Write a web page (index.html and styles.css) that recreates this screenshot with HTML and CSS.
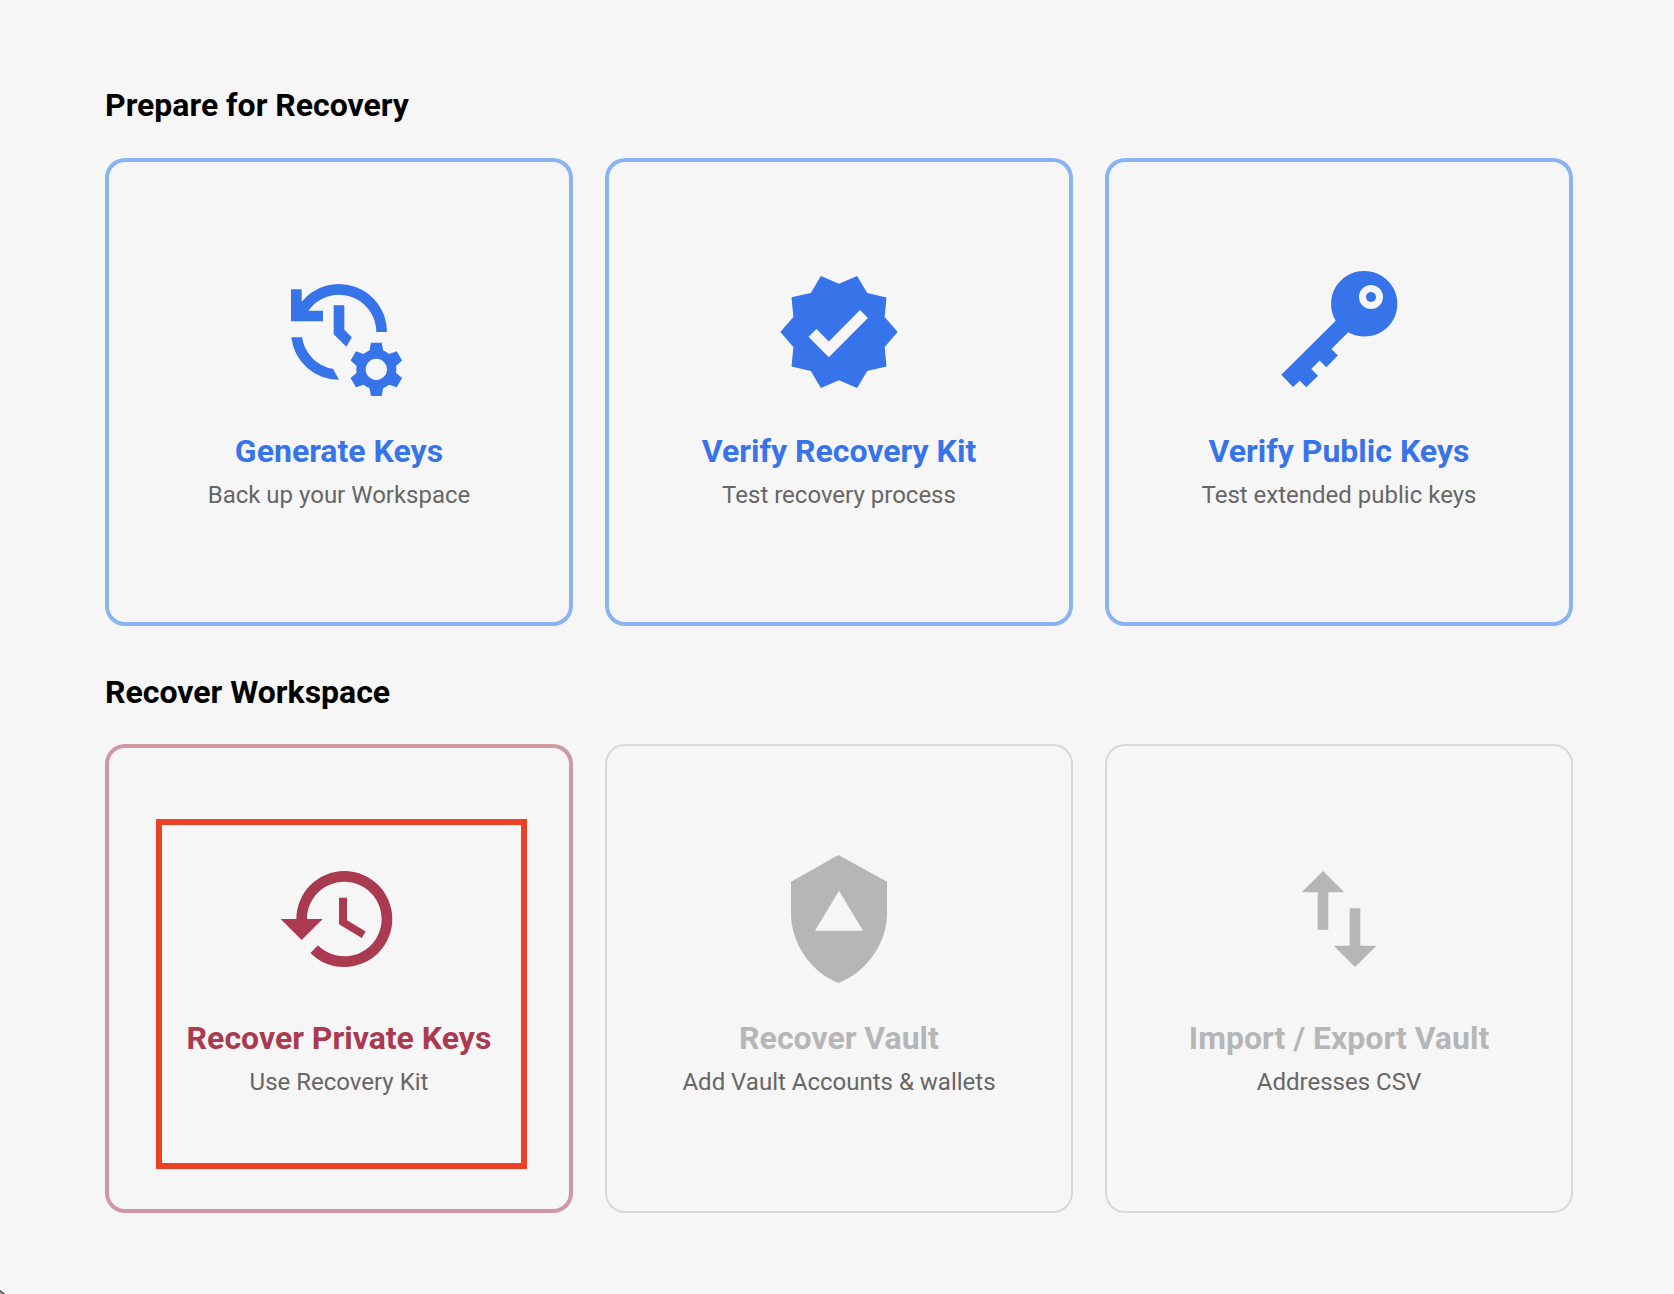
FILE: index.html
```html
<!DOCTYPE html>
<html lang="en">
<head>
<meta charset="utf-8">
<title>Recovery Utility</title>
<link rel="stylesheet" href="styles.css">
</head>
<body>
<main class="page">
  <section class="section">
    <h1 class="heading">Prepare for Recovery</h1>
    <div class="cards">
      <a class="card primary">
        <svg class="icon" viewBox="0 0 24 24"><path d="M3 4h2v2.35A9 9 0 0 1 21 12h-2A7 7 0 0 0 6.26 8H9v2H3zM3.05 13h2.02a7 7 0 0 0 5.8 5.9L12 20.97A9 9 0 0 1 3.05 13zM11 7h2v4.6l1.4 1.4-1.02 1.78L11 12.4z"/><path transform="translate(2 3)" d="M20.75 16c0-.22-.03-.42-.06-.63l1.14-1.01-1-1.73-1.45.49c-.32-.27-.68-.48-1.08-.63L18 11h-2l-.3 1.49c-.4.15-.76.36-1.08.63l-1.45-.49-1 1.73 1.14 1.01c-.03.21-.06.41-.06.63s.03.42.06.63l-1.14 1.01 1 1.73 1.45-.49c.32.27.68.48 1.08.63L16 21h2l.3-1.49c.4-.15.76-.36 1.08-.63l1.45.49 1-1.73-1.14-1.01c.03-.21.06-.41.06-.63zM17 18c-1.1 0-2-.9-2-2s.9-2 2-2 2 .9 2 2-.9 2-2 2z"/></svg>
        <h2 class="title">Generate Keys</h2>
        <p class="subtitle">Back up your Workspace</p>
      </a>
      <a class="card primary">
        <svg class="icon" viewBox="0 0 24 24"><path d="M23 12l-2.44-2.79.34-3.69-3.61-.82-1.89-3.2L12 2.96 8.6 1.5 6.71 4.69 3.1 5.5l.34 3.7L1 12l2.44 2.79-.34 3.7 3.61.82L8.6 22.5l3.4-1.47 3.4 1.46 1.89-3.19 3.61-.82-.34-3.69L23 12zm-12.91 4.72l-3.8-3.81 1.48-1.48 2.32 2.33 5.85-5.87 1.48 1.48z"/></svg>
        <h2 class="title">Verify Recovery Kit</h2>
        <p class="subtitle">Test recovery process</p>
      </a>
      <a class="card primary">
        <svg class="icon" viewBox="0 0 128 128"><path fill-rule="evenodd" d="M89 3a32.8 32.8 0 1 1-15.7 61.3L56.4 81l6.4 6.6-11.5 11.7-6.7-6.7-8.3 8.4 6.7 6.7-11.7 11.6-6.6-6.6L18 119 6.3 106.7l54.4-54A32.8 32.8 0 0 1 89 3zM96 17a12 12 0 1 0 0 24 12 12 0 0 0 0-24z"/><circle cx="96" cy="29" r="5"/></svg>
        <h2 class="title">Verify Public Keys</h2>
        <p class="subtitle">Test extended public keys</p>
      </a>
    </div>
  </section>
  <section class="section">
    <h1 class="heading">Recover Workspace</h1>
    <div class="cards">
      <a class="card danger">
        <svg class="icon" viewBox="0 0 24 24"><path d="M13 3a9 9 0 0 0-9 9H1.05L5 15.95 8.95 12H6c0-3.87 3.13-7 7-7s7 3.13 7 7-3.13 7-7 7c-1.93 0-3.68-.79-4.94-2.06l-1.42 1.42A8.954 8.954 0 0 0 13 21a9 9 0 0 0 0-18zm-1 5v5l4.28 2.54.72-1.21-3.5-2.08V8z"/></svg>
        <h2 class="title">Recover Private Keys</h2>
        <p class="subtitle">Use Recovery Kit</p>
        <span class="highlight"></span>
      </a>
      <a class="card disabled">
        <svg class="icon" viewBox="0 0 24 24"><path d="M11.9 0L3 5v6c0 5.55 3.8 11 8.9 13 5.2-2 9.1-7.45 9.1-13V5zM12 6.7l4.5 7.5h-9z"/></svg>
        <h2 class="title">Recover Vault</h2>
        <p class="subtitle">Add Vault Accounts &amp; wallets</p>
      </a>
      <a class="card disabled">
        <svg class="icon" viewBox="0 0 24 24"><path d="M9 3L5 6.99h3V14h2V6.99h3zM16 17.01V10h-2v7.01h-3L15 21l4-3.99z"/></svg>
        <h2 class="title">Import / Export Vault</h2>
        <p class="subtitle">Addresses CSV</p>
      </a>
    </div>
  </section>
</main>
<span class="window-corner"></span>
</body>
</html>
```
FILE: styles.css
```css
* { box-sizing: border-box; }

body {
  margin: 0;
  height: 1294px;
  overflow: hidden;
  position: relative;
  background: #f6f6f6;
  font-family: Roboto, sans-serif;
}

.page {
  padding: 86px 101px 0 105px;
  display: flex;
  flex-direction: column;
  gap: 47px;
}

.heading, .title {
  margin: 0;
  font-size: 32px;
  line-height: 38px;
  font-weight: 700;
}

.heading {
  color: #000;
  margin-bottom: 34px;
}

.section + .section .heading { margin-bottom: 33px; }

.cards {
  display: grid;
  grid-template-columns: repeat(3, 468px);
  gap: 32px;
}

.card {
  position: relative;
  height: 468px;
  padding-top: 110px;
  display: flex;
  flex-direction: column;
  align-items: center;
  border-radius: 20px;
  box-shadow: inset 0 0 0 4px var(--edge);
  color: var(--tone);
}

.primary { --tone: #3874e9; --edge: #8ab4f1; }
.danger { --tone: #a93a50; --edge: #cf98a3; }
.disabled { --tone: #b6b6b6; --edge: #d8d8d8; box-shadow: inset 0 0 0 2px var(--edge); }

.section + .section .card {
  height: 469px;
  padding-top: 111px;
}

.icon {
  width: 128px;
  height: 128px;
  fill: currentColor;
  margin-bottom: 36px;
}

.subtitle {
  margin: 11px 0 0;
  font-size: 24px;
  line-height: 28px;
  color: #666;
}

.highlight {
  position: absolute;
  left: 50.5px;
  top: 74.5px;
  width: 371px;
  height: 350px;
  border: 6px solid #ec4027;
}

.window-corner {
  position: absolute;
  left: 0;
  bottom: 0;
  width: 5px;
  height: 4px;
  background: linear-gradient(38deg, #999 0 25%, #444 45%, transparent 60%);
}
```
